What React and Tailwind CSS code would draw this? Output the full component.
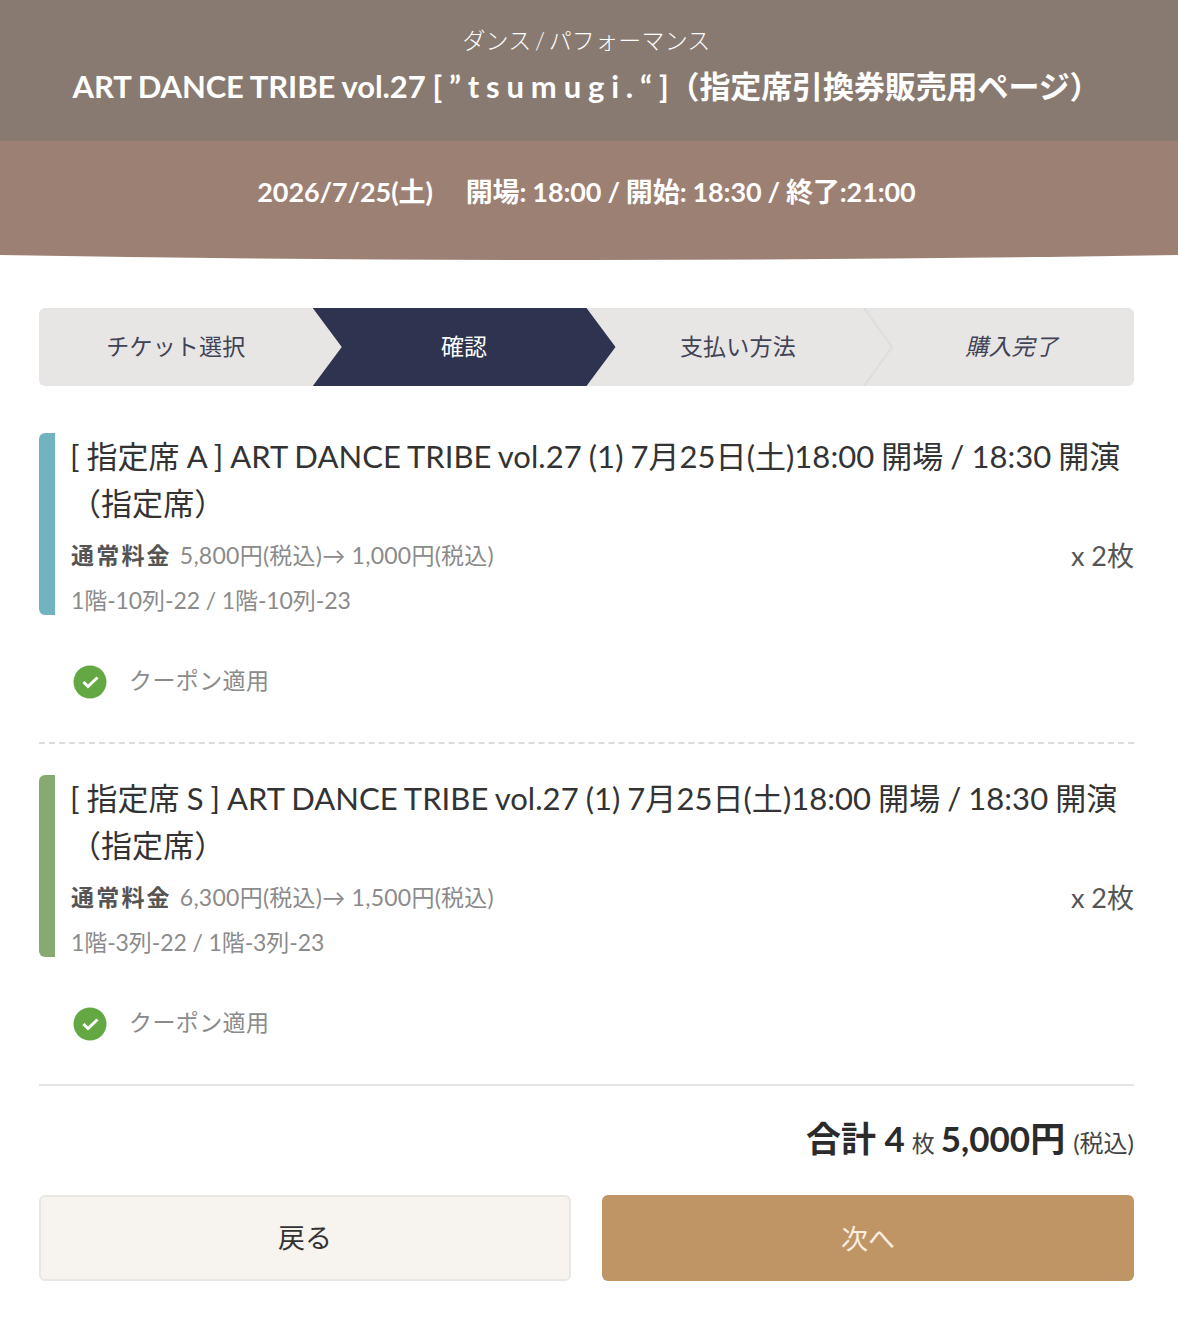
const fontStack = { fontFamily: '"Lato", "Noto Sans CJK JP", sans-serif' };

function Step({ label, active, first, italic, chevron }) {
  if (active) {
    return (
      <div className="relative z-10 -mr-[29px] flex items-center justify-center bg-[#2e344f] pb-[1px] text-white [clip-path:polygon(0_0,calc(100%-29px)_0,100%_50%,calc(100%-29px)_100%,0_100%,29px_50%)]">
        {label}
      </div>
    );
  }
  return (
    <div className={`relative flex items-center justify-center pb-[1px] ${first ? "" : "pl-[29px]"} ${italic ? "italic" : ""}`}>
      {chevron && (
        <svg className="absolute left-[3px] top-0 h-full w-[31px]" viewBox="0 0 31 78" fill="none">
          <path d="M1 0L29 39L1 78" stroke="#dedddd" strokeWidth="2" />
        </svg>
      )}
      {label}
    </div>
  );
}

function Ticket({ color, seat, regular, price, seats }) {
  return (
    <div>
      <div className="flex">
        <div className="w-4 shrink-0 rounded-l-md" style={{ backgroundColor: color }} />
        <div className="min-w-0 flex-1 pl-[15px]">
          <p className="text-[31px] leading-[47px] tracking-[0.05px] [word-spacing:-1px] text-[#333]">
            [ 指定席 {seat} ] ART DANCE TRIBE vol.27 (1) 7月25日(土)18:00 開場 / 18:30 開演（指定席）
          </p>
          <div className="mt-[8px] flex items-start justify-between">
            <p className="pl-px text-[23px] leading-[40px] tracking-[0.25px] text-[#8b8b8b]">
              <span className="mr-[8px] font-bold tracking-[2.2px] text-[#555]">通常料金</span>
              {regular}(税込)→ {price}(税込)
            </p>
            <p className="h-[40px] text-[27px] leading-[41px] text-[#555]">x 2枚</p>
          </div>
          <p className="mt-[10px] pl-px text-[23px] leading-[30px] tracking-[-0.1px] text-[#8b8b8b]">{seats}</p>
        </div>
      </div>
      <div className="mt-[50px] flex items-center pl-[34px]">
        <svg className="h-[34px] w-[34px]" viewBox="0 0 34 34">
          <circle cx="17" cy="17" r="16.5" fill="#64a844" />
          <path d="M10.5 17L15 21.5L24.5 12.5" fill="none" stroke="white" strokeWidth="3" />
        </svg>
        <span className="ml-[22px] h-[34px] text-[23px] leading-[31px] tracking-[0.4px] text-[#8b8b8b]">クーポン適用</span>
      </div>
    </div>
  );
}

export default function App() {
  return (
    <div className="min-h-[1321px] bg-white pb-10" style={fontStack}>
      <header className="h-[141px] bg-[#887a70] pt-[23px] pr-[5px] text-center text-white">
        <p className="text-[23px] leading-[34px] font-light tracking-[0.2px] [word-spacing:-3px]">ダンス / パフォーマンス</p>
        <h1 className="mt-[6px] text-[31px] leading-[46px] font-bold tracking-[-0.1px] [word-spacing:-0.5px]">
          ART DANCE TRIBE vol.27 [ ” t s u m u g i . “ ]（指定席引換券販売用ページ）
        </h1>
      </header>
      <div className="flex h-[114px] items-start justify-center bg-[#9d8074] pt-[31px] pr-[5px] text-[27px] leading-[40px] font-bold tracking-[-0.1px] [word-spacing:-0.5px] text-white">
        <span>2026/7/25(土)</span>
        <span className="ml-[33px]">開場: 18:00 / 開始: 18:30 / 終了:21:00</span>
      </div>
      <svg className="block h-[6px] w-full" viewBox="0 0 1178 6" preserveAspectRatio="none">
        <path d="M0 0H1178V0Q589 10 0 0Z" fill="#9d8074" />
      </svg>

      <main className="px-[39px] pt-[47px] pr-[44px]">
        <nav className="grid h-[78px] grid-cols-4 overflow-hidden rounded-md bg-[#e8e5e5] text-[23px] tracking-[0.2px] text-[#3f4356]">
          <Step label="チケット選択" first />
          <Step label="確認" active />
          <Step label="支払い方法" />
          <Step label="購入完了" italic chevron />
        </nav>

        <div className="mt-[47px]">
          <Ticket color="#72b3c1" seat="A" regular="5,800円" price="1,000円" seats="1階-10列-22 / 1階-10列-23" />
        </div>
        <div className="mt-[43px] mb-[31px] border-t-2 border-dashed border-[#dcdcdc]" />
        <Ticket color="#86aa72" seat="S" regular="6,300円" price="1,500円" seats="1階-3列-22 / 1階-3列-23" />
        <div className="mt-[43px] border-t-2 border-[#e4e4e4]" />

        <div className="mt-[26px] flex items-baseline justify-end text-[#2b2b2b]">
          <span className="text-[35px] leading-[52px] font-bold">合計 4</span>
          <span className="ml-[7px] text-[23px] text-[#444]">枚</span>
          <span className="ml-[6px] text-[35px] leading-[52px] font-bold">5,000円</span>
          <span className="ml-[8px] text-[24px] text-[#444]">(税込)</span>
        </div>

        <div className="mt-[31px] grid grid-cols-2 gap-[31px]">
          <button className="h-[86px] rounded-md border-2 border-[#e9e6e3] bg-[#f7f3ef] text-[27px] text-[#333]">戻る</button>
          <button className="h-[86px] rounded-md bg-[#c09566] pt-[2px] text-[27px] text-[#f8eee0]">次へ</button>
        </div>
      </main>
    </div>
  );
}
